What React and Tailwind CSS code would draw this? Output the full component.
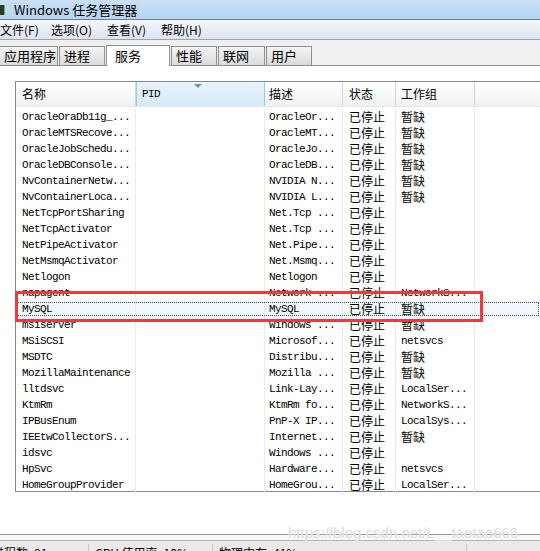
import React from 'react'

const rows = [
  ['OracleOraDb11g_...', 'OracleOr...', '已停止', '暂缺'],
  ['OracleMTSRecove...', 'OracleMT...', '已停止', '暂缺'],
  ['OracleJobSchedu...', 'OracleJo...', '已停止', '暂缺'],
  ['OracleDBConsole...', 'OracleDB...', '已停止', '暂缺'],
  ['NvContainerNetw...', 'NVIDIA N...', '已停止', '暂缺'],
  ['NvContainerLoca...', 'NVIDIA L...', '已停止', '暂缺'],
  ['NetTcpPortSharing', 'Net.Tcp ...', '已停止', ''],
  ['NetTcpActivator', 'Net.Tcp ...', '已停止', ''],
  ['NetPipeActivator', 'Net.Pipe...', '已停止', ''],
  ['NetMsmqActivator', 'Net.Msmq...', '已停止', ''],
  ['Netlogon', 'Netlogon', '已停止', ''],
  ['napagent', 'Network ...', '已停止', 'NetworkS...'],
  ['MySQL', 'MySQL', '已停止', '暂缺'],
  ['msiserver', 'Windows ...', '已停止', '暂缺'],
  ['MSiSCSI', 'Microsof...', '已停止', 'netsvcs'],
  ['MSDTC', 'Distribu...', '已停止', '暂缺'],
  ['MozillaMaintenance', 'Mozilla ...', '已停止', '暂缺'],
  ['lltdsvc', 'Link-Lay...', '已停止', 'LocalSer...'],
  ['KtmRm', 'KtmRm fo...', '已停止', 'NetworkS...'],
  ['IPBusEnum', 'PnP-X IP...', '已停止', 'LocalSys...'],
  ['IEEtwCollectorS...', 'Internet...', '已停止', '暂缺'],
  ['idsvc', 'Windows ...', '已停止', ''],
  ['HpSvc', 'Hardware...', '已停止', 'netsvcs'],
  ['HomeGroupProvider', 'HomeGrou...', '已停止', 'LocalSer...'],
]

const cjk = "font-['Noto_Sans_CJK_SC',sans-serif]"
const mono = "font-['Liberation_Mono','Noto_Sans_CJK_SC',monospace] text-[11px] tracking-[-0.6px] text-black"
const cols = 'grid grid-cols-[120px_129px_78px_53px_79px_1fr]'

function Tab({ label, w, active }) {
  if (active) {
    return (
      <div
        className={`${w} h-[21px] -mb-px bg-white border border-b-0 border-[#8e8f8f] flex items-center pl-2 text-[13px] text-black z-10`}
      >
        {label}
      </div>
    )
  }
  return (
    <div
      className={`${w} h-[19px] bg-gradient-to-b from-[#f4f4f4] to-[#dadada] border border-b-0 border-[#8e8f8f] flex items-center pl-1 text-[13px] text-black`}
    >
      {label}
    </div>
  )
}

function Row({ r, selected }) {
  const cell = 'h-[16px] flex items-center border-r border-[#e6ebf1] whitespace-nowrap overflow-hidden'
  return (
    <div
      className={`${cols} ${selected ? 'bg-[#f1f7fd] outline outline-1 outline-dotted outline-[#3b4f66] -outline-offset-2' : ''}`}
    >
      <div className={`${cell} ${mono} pl-[6px]`}>{r[0]}</div>
      <div className={cell}></div>
      <div className={`${cell} ${mono} pl-[4px]`}>{r[1]}</div>
      <div className={`${cell} ${cjk} text-[12px] pl-[6px]`}>{r[2]}</div>
      <div className={`${cell} ${r[3] === '暂缺' ? `${cjk} text-[12px]` : mono} pl-[5px]`}>{r[3]}</div>
      <div className="h-[16px]"></div>
    </div>
  )
}

export default function App() {
  return (
    <div className={`relative w-[540px] h-[551px] overflow-hidden bg-white text-black ${cjk}`}>
      {/* title bar */}
      <div className="h-[20px] bg-gradient-to-b from-[#c9e0f6] to-[#b7d4f1] border-b border-[#6f7d8e] flex items-center">
        <div className="w-[5px] h-[10px] bg-[#2b3b2b] border-r border-[#5ab84a] mr-[9px]"></div>
        <span className="text-[13px] text-black">Windows 任务管理器</span>
      </div>
      {/* menu bar */}
      <div className="h-[20px] bg-gradient-to-b from-[#f5f7fc] to-[#dde3f0] border-b border-[#9ea3ad] flex items-center text-[12px]">
        <span className="w-[51px]">文件(F)</span>
        <span className="w-[56px]">选项(O)</span>
        <span className="w-[54px]">查看(V)</span>
        <span>帮助(H)</span>
      </div>
      {/* tabs */}
      <div className="h-[26px] bg-[#f0f0f0] flex items-end border-b border-[#8e8f8f] gap-[1px]">
        <Tab label="应用程序" w="w-[59px] -ml-px" />
        <Tab label="进程" w="w-[46px]" />
        <Tab label="服务" w="w-[64px]" active />
        <Tab label="性能" w="w-[46px]" />
        <Tab label="联网" w="w-[47px]" />
        <Tab label="用户" w="w-[46px]" />
      </div>
      {/* panel */}
      <div className="h-[468px] bg-white pt-[15px] pl-[15px]">
        <div className="border border-r-0 border-[#828790] h-[411px]">
          {/* header */}
          <div className={`${cols} h-[24px] text-[12px]`}>
            <div className="flex items-center pl-[6px] bg-gradient-to-b from-white to-[#f1f2f4] border-r border-[#d5d5d5]">名称</div>
            <div className="relative flex items-center pl-[5px] bg-gradient-to-b from-[#e9f4fc] to-[#d6eaf7] border-x border-[#97cbeb]">
              <span className={mono}>PID</span>
              <div className="absolute top-[2px] left-[57px] w-0 h-0 border-l-[4px] border-r-[4px] border-t-[4px] border-l-transparent border-r-transparent border-t-[#6e95b8]"></div>
            </div>
            <div className="flex items-center pl-[4px] bg-gradient-to-b from-white to-[#f1f2f4] border-r border-[#d5d5d5]">描述</div>
            <div className="flex items-center pl-[6px] bg-gradient-to-b from-white to-[#f1f2f4] border-r border-[#d5d5d5]">状态</div>
            <div className="flex items-center pl-[5px] bg-gradient-to-b from-white to-[#f1f2f4] border-r border-[#d5d5d5]">工作组</div>
            <div className="bg-gradient-to-b from-white to-[#f1f2f4]"></div>
          </div>
          <div className="border-t border-[#e5e5e5] pt-[2px]">
            {rows.map((r, i) => (
              <Row key={i} r={r} selected={r[0] === 'MySQL'} />
            ))}
          </div>
        </div>
      </div>
      {/* status bar */}
      <div className="border-t border-[#9a9a9a] h-[6px] bg-[#f7f7f7]"></div>
      <div className="border-t border-[#b5b5b5] h-[16px] bg-[#ece9e8] flex text-[12px] pt-[3px]">
        <div className="w-[97px] border-r border-[#c8c6c5] -ml-[8px] whitespace-nowrap overflow-hidden">进程数: 81</div>
        <div className="w-[124px] border-r border-[#c8c6c5] pl-[6px] whitespace-nowrap">CPU 使用率: 10%</div>
        <div className="w-[254px] border-r border-[#c8c6c5] pl-[6px] whitespace-nowrap">物理内存: 41%</div>
      </div>

      {/* red highlight box */}
      <div className="absolute left-[15px] top-[291px] w-[468px] h-[31px] border-[3px] border-[#ef3a3b]"></div>
      {/* watermark */}
      <div className="absolute left-[288px] top-[522px] text-[15px] text-[#dcdcdc] font-['Liberation_Sans',sans-serif] [text-shadow:0_0_1px_#ffffff]">
        https://blog.csdn.net/L__taotao666
      </div>
    </div>
  )
}
